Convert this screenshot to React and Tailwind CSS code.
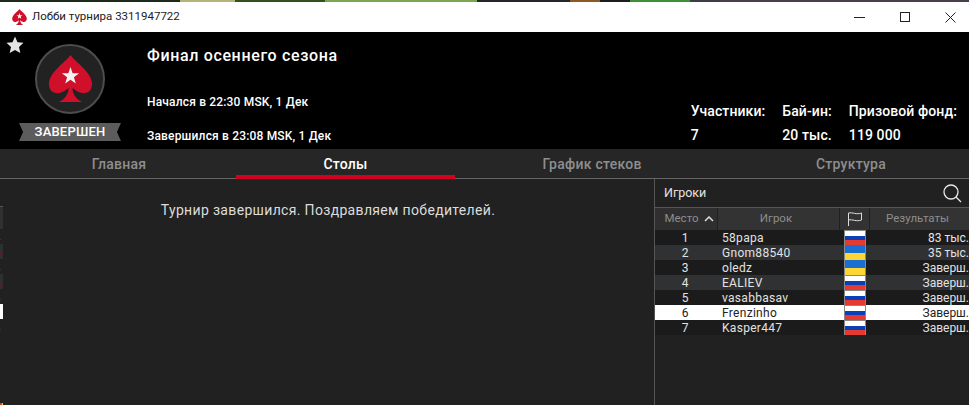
const rows = [
  ["1", "58papa", "83 тыс.", "ru"],
  ["2", "Gnom88540", "35 тыс.", "ua"],
  ["3", "oledz", "Заверш.", "ua"],
  ["4", "EALIEV", "Заверш.", "ru"],
  ["5", "vasabbasav", "Заверш.", "ru"],
  ["6", "Frenzinho", "Заверш.", "ru"],
  ["7", "Kasper447", "Заверш.", "ru"],
];

const strip = [
  ["w-[180px]", "bg-[#1c2a1c]"],
  ["w-[55px]", "bg-[#b4b47a]"],
  ["w-[90px]", "bg-[#34501f]"],
  ["w-[152px]", "bg-[#7aa650]"],
  ["w-[93px]", "bg-[#23262a]"],
  ["w-[30px]", "bg-[#8a5a24]"],
  ["w-[30px]", "bg-[#1d1d1d]"],
  ["w-[60px]", "bg-[#3d8f3a]"],
  ["w-[30px]", "bg-[#3d3d46]"],
  ["flex-1", "bg-[#4a3f4c]"],
];

function Flag({ kind }) {
  return kind === "ru" ? (
    <div className="flex h-[15px] w-[22px] flex-col border-x border-t border-[#888]">
      <div className="flex-1 bg-white" />
      <div className="flex-1 bg-[#0b3fb5]" />
      <div className="flex-1 bg-[#e53a32]" />
    </div>
  ) : (
    <div className="flex h-[15px] w-[22px] flex-col border-x border-[#888]">
      <div className="flex-1 bg-[#1a6fd0]" />
      <div className="flex-1 bg-[#fdd636]" />
    </div>
  );
}

function Spade({ width, height, fill, star }) {
  return (
    <svg width={width} height={height} viewBox="0 0 43 47">
      <path
        fill={fill}
        d="M21.500 0C17 7 0 17 0 29C0 36 5 39 10 38C13 37.500 16 36 19.500 33C19.500 39 16 44 10 47H33C27 44 23.500 39 23.500 33C27 36 30 37.500 33 38C38 39 43 36 43 29C43 17 26 7 21.500 0Z"
      />
      <path
        fill={star}
        d="M21.500 12l2.100 6.200 6.500.1-5.200 3.900 1.900 6.300-5.300-3.700-5.300 3.700 1.900-6.300-5.200-3.900 6.500-.1z"
      />
    </svg>
  );
}

export default function App() {
  return (
    <div className="relative flex h-[405px] w-[969px] flex-col overflow-hidden bg-[#212121] font-['Roboto',sans-serif]">
      <div className="flex h-[2px]">
        {strip.map(([w, c], i) => (
          <div key={i} className={`${w} ${c}`} />
        ))}
      </div>
      <div className="flex h-[30px] items-center bg-white pl-3 text-[11.500px] text-[#222]">
        <Spade width={15} height={16} fill="#d0102a" star="#fff" />
        <span className="ml-[5px]">Лобби турнира 3311947722</span>
        <div className="ml-auto flex items-center pr-[13px]">
          <div className="h-px w-[11px] bg-[#222]" />
          <div className="ml-[35px] h-[10px] w-[10px] border border-[#222]" />
          <svg className="ml-[35px]" width="11" height="11" viewBox="0 0 11 11">
            <path d="M.5.5l10 10M10.500.5l-10 10" stroke="#222" strokeWidth="1" />
          </svg>
        </div>
      </div>

      <div className="relative flex h-[117px] bg-black text-white">
        <svg className="absolute left-[6px] top-[4px]" width="18" height="18" viewBox="0 0 18 18">
          <path fill="#e4e4e4" d="M9 .5l2.500 5.700 6 .6-4.500 4.100 1.300 6.100L9 13.900 3.700 17.100 5 11 .5 6.800l6-.6z" />
        </svg>
        <div className="ml-[19px] flex w-[102px] flex-col items-center pt-[12px]">
          <div className="flex h-[70px] w-[70px] items-center justify-center rounded-full border-2 border-[#4d4d4d] bg-[#222] pb-[2px]">
            <Spade width={43} height={47} fill="#d0102a" star="#f2f2f2" />
          </div>
          <div className="mt-[9px] flex h-[18px] w-[102px] items-center justify-center bg-[#5c5c5c] text-[13px] font-medium tracking-[0.2px] text-white [clip-path:polygon(0_0,100%_0,96%_50%,100%_100%,0_100%,4%_50%)]">
            ЗАВЕРШЕН
          </div>
        </div>
        <div className="ml-[26px] flex flex-col pt-[14px]">
          <div className="text-[16px] font-medium leading-[20px] tracking-[0.65px]">Финал осеннего сезона</div>
          <div className="mt-[28px] text-[12px] font-medium leading-[16px] tracking-[0.17px]">Начался в 22:30 MSK, 1 Дек</div>
          <div className="mt-[18px] text-[12px] font-medium leading-[16px] tracking-[0.17px]">Завершился в 23:08 MSK, 1 Дек</div>
        </div>
        <div className="ml-auto flex gap-[17px] pr-[12px] pt-[70px] text-[14px] font-medium leading-[18px] tracking-[0.1px]">
          <div className="flex flex-col gap-[6px]"><span>Участники:</span><span>7</span></div>
          <div className="flex flex-col gap-[6px]"><span>Бай-ин:</span><span>20 тыс.</span></div>
          <div className="flex flex-col gap-[6px]"><span>Призовой фонд:</span><span>119 000</span></div>
        </div>
      </div>

      <div className="flex h-[30px] border-b border-[#666] bg-[#262626] pt-px text-[14px] font-medium tracking-[0.25px] text-[#8e8e8e]">
        <div className="flex w-[236px] items-center justify-center pl-[2px]">Главная</div>
        <div className="relative flex w-[219px] items-center justify-center text-white">
          Столы
          <div className="absolute bottom-[-1px] left-0 right-0 h-[4px] bg-[#d0021f]" />
        </div>
        <div className="flex w-[274px] items-center justify-center">График стеков</div>
        <div className="flex flex-1 items-center justify-center pl-[4px]">Структура</div>
      </div>

      <div className="flex min-h-0 flex-1">
        <div className="relative flex-1">
          <div className="pl-[2px] pt-[22px] text-center text-[14px] leading-[18px] tracking-[0.33px] text-[#dcdcdc]">
            Турнир завершился. Поздравляем победителей.
          </div>
          <div className="absolute left-0 top-[27px] h-[23px] w-[3px] border-t border-[#555] bg-[#303030]" />
          <div className="absolute left-0 top-[65px] h-[15px] w-[3px] bg-[#2d3032]" />
          <div className="absolute left-0 top-[95px] h-[15px] w-[3px] bg-[#2d3032]" />
          <div className="absolute left-0 top-[125px] h-[15px] w-[3px] bg-white" />
          <div className="absolute left-0 top-[60px] h-px w-px bg-[#8c1020]" />
          <div className="absolute left-0 top-[75px] h-px w-px bg-[#8c1020]" />
          <div className="absolute left-0 top-[90px] h-px w-px bg-[#8c1020]" />
          <div className="absolute left-0 top-[105px] h-px w-px bg-[#8c1020]" />
          <div className="absolute left-0 top-[120px] h-px w-px bg-[#8c1020]" />
          <div className="absolute left-0 top-[150px] h-px w-px bg-[#8c1020]" />
          <div className="absolute bottom-0 left-0 flex h-[2px] w-[3px]">
            <div className="flex-1 bg-[#d4302a]" />
            <div className="flex-1 bg-[#2a8ad4]" />
            <div className="flex-1 bg-[#e0c030]" />
          </div>
        </div>
        <div className="flex w-[315px] flex-col border-l border-[#555]">
          <div className="flex h-[29px] items-center justify-between border-b border-[#555] pl-[9px] pr-[7px] text-[12.500px] text-[#e4e4e4]">
            Игроки
            <svg width="19" height="19" viewBox="0 0 19 19" fill="none" stroke="#e8e8e8" strokeWidth="1.300">
              <circle cx="8" cy="8" r="7" />
              <path d="M13 13l5 5" />
            </svg>
          </div>
          <div className="flex h-[22px] text-[11.500px] text-[#8e8e8e]">
            <div className="flex w-[62px] items-center justify-center gap-[5px] bg-[#2f2f2f] pl-[6px]">
              Место
              <svg width="10" height="6" viewBox="0 0 10 6" fill="none" stroke="#ddd" strokeWidth="1.500"><path d="M1 5l4-4 4 4" /></svg>
            </div>
            <div className="ml-px flex w-[121px] items-center justify-center bg-[#333] pr-[5px]">Игрок</div>
            <div className="ml-px flex w-[29px] items-center justify-center bg-[#333]">
              <svg width="16" height="14" viewBox="0 0 16 14" fill="none" stroke="#ddd" strokeWidth="1"><path d="M1.500 14V1c4-1 8 2 13 0v7c-5 2-9-1-13 0" /></svg>
            </div>
            <div className="ml-px flex flex-1 items-center justify-center bg-[#333] pr-[4px]">Результаты</div>
          </div>
          {rows.map((r, i) => (
            <div
              key={r[1]}
              className={`flex h-[15px] items-center pt-px text-[12px] leading-[14px] ${
                i === 5 ? "bg-white text-[#222]" : i % 2 === 1 ? "bg-[#2f3133] text-[#e2e2e2]" : "bg-[#1b1b1b] text-[#e2e2e2]"
              }`}
            >
              <div className="w-[59px] pl-px text-center">{r[0]}</div>
              <div className="w-[126px] pl-[8px] tracking-[0.3px]">{r[1]}</div>
              <div className="-mt-px w-[32px] pl-[4px]"><Flag kind={r[3]} /></div>
              <div className="flex flex-1 justify-end overflow-hidden whitespace-nowrap">{r[2]}</div>
            </div>
          ))}
        </div>
      </div>
    </div>
  );
}
